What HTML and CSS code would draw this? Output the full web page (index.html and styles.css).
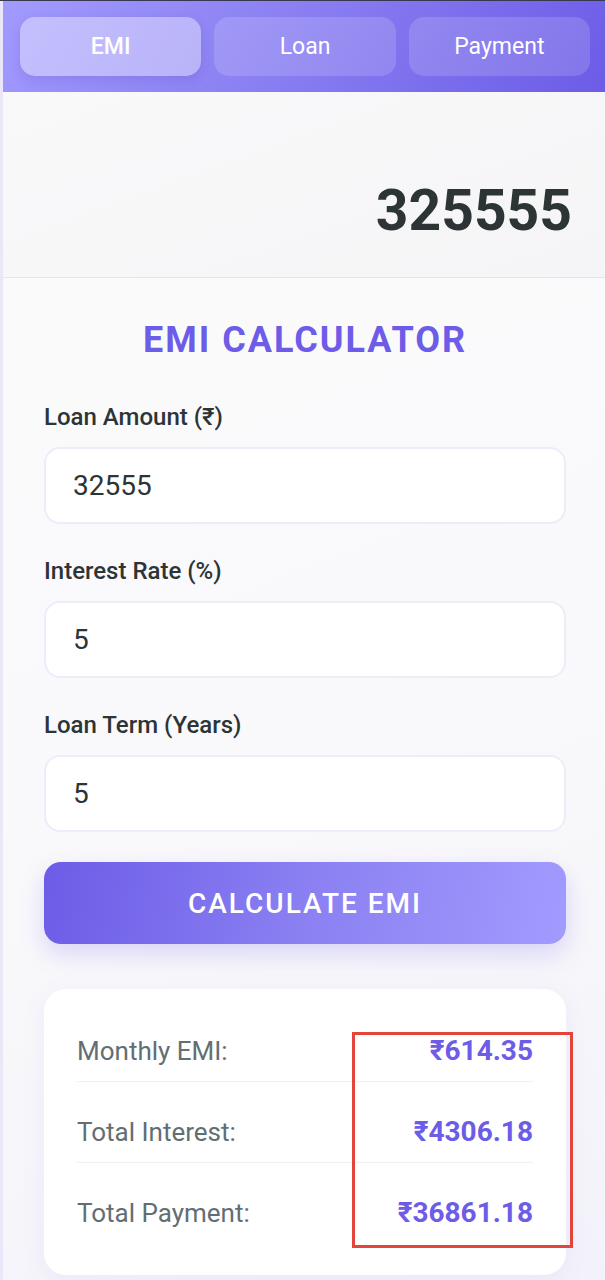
FILE: index.html
```html
<!DOCTYPE html>
<html lang="en">
<head>
    <meta name="viewport" content="width=device-width, initial-scale=1.0">
    <title>EMI Calculator</title>
    <link rel="stylesheet" href="styles.css">
</head>
<body>
    <div class="app">
        <nav class="tabs">
            <button class="tab active">EMI</button>
            <button class="tab">Loan</button>
            <button class="tab">Payment</button>
        </nav>
        <div class="display" id="display">325555</div>
        <main class="calc">
            <h1>EMI CALCULATOR</h1>
            <div class="field">
                <label for="amount">Loan Amount (₹)</label>
                <input type="text" id="amount" class="field-input" value="32555">
            </div>
            <div class="field">
                <label for="rate">Interest Rate (%)</label>
                <input type="text" id="rate" class="field-input" value="5">
            </div>
            <div class="field">
                <label for="term">Loan Term (Years)</label>
                <input type="text" id="term" class="field-input" value="5">
            </div>
            <button class="calc-btn">CALCULATE EMI</button>
            <div class="results">
                <div class="row">
                    <span class="row-label">Monthly EMI:</span>
                    <span class="row-value">₹614.35</span>
                </div>
                <div class="row">
                    <span class="row-label">Total Interest:</span>
                    <span class="row-value">₹4306.18</span>
                </div>
                <div class="row">
                    <span class="row-label">Total Payment:</span>
                    <span class="row-value">₹36861.18</span>
                </div>
                <span class="highlight"></span>
            </div>
        </main>
    </div>
</body>
</html>
```

FILE: styles.css
```css
* {
    box-sizing: border-box;
}
body {
    margin: 0;
    font-family: Roboto, "Noto Sans", sans-serif;
    background-color: #e9e7f8;
    border-top: 1px solid #3a3850;
}
.app {
    margin-left: 3px;
    min-height: 1279px;
    background: linear-gradient(160deg, #fbfbfc 0%, #f9f9fb 60%, #f3f2fa 100%);
}
.tabs {
    display: grid;
    grid-template-columns: repeat(3, 1fr);
    gap: 13px;
    padding: 16px 15px 16px 17px;
    background: linear-gradient(120deg, #a29bfe 0%, #8a80f2 45%, #6c5ce7 100%);
}
.tab {
    height: 59px;
    padding: 0;
    border: none;
    border-radius: 15px;
    background: rgba(255, 255, 255, 0.15);
    color: white;
    font-family: Roboto, sans-serif;
    font-size: 23px;
    cursor: pointer;
}
.tab.active {
    background: rgba(255, 255, 255, 0.38);
    font-weight: 500;
    box-shadow: 0 4px 12px rgba(60, 40, 160, 0.15);
}
.display {
    padding: 85px 33px 32px;
    line-height: 68px;
    text-align: right;
    font-size: 57px;
    font-weight: bold;
    color: #2d3436;
    background: linear-gradient(160deg, #f9f9fa, #f5f5f7);
    border-bottom: 1px solid #e6e6ea;
}
.calc {
    padding: 42px 39px 6px 41px;
}
.calc h1 {
    margin: 0 0 44px;
    text-align: center;
    font-size: 36px;
    line-height: 41px;
    font-weight: bold;
    letter-spacing: 2px;
    color: #6c5ce7;
}
.field + .field {
    margin-top: 35px;
}
.field label {
    display: block;
    margin-bottom: 17px;
    font-size: 24px;
    line-height: 25px;
    font-weight: 500;
    color: #2d3436;
}
.field-input {
    display: block;
    width: 100%;
    height: 77px;
    padding: 0 27px;
    border: 2px solid #eeebfc;
    border-radius: 16px;
    background: white;
    font-family: Roboto, sans-serif;
    font-size: 28px;
    color: #2d3436;
}
.calc-btn {
    display: block;
    width: 100%;
    height: 82px;
    margin-top: 30px;
    border: none;
    border-radius: 17px;
    background: linear-gradient(100deg, #6c5ce7 0%, #8a80f2 50%, #a29bfe 100%);
    box-shadow: 0 10px 25px rgba(108, 92, 231, 0.22);
    color: white;
    font-family: Roboto, sans-serif;
    font-size: 28px;
    font-weight: 500;
    letter-spacing: 2px;
    cursor: pointer;
}
.results {
    position: relative;
    margin-top: 45px;
    padding: 12px 33px 32px;
    background: white;
    border-radius: 22px;
    box-shadow: 0 5px 25px rgba(108, 92, 231, 0.08);
}
.row {
    display: flex;
    justify-content: space-between;
    padding: 35px 0 15px;
    line-height: 30px;
}
.row + .row {
    border-top: 1px solid #f0eff6;
}
.row-label {
    font-size: 26px;
    color: #636e72;
}
.row-value {
    font-size: 28px;
    font-weight: bold;
    color: #6c5ce7;
}
.highlight {
    position: absolute;
    left: 308px;
    top: 43px;
    width: 221px;
    height: 216px;
    border: 3px solid #e3453b;
}
```
